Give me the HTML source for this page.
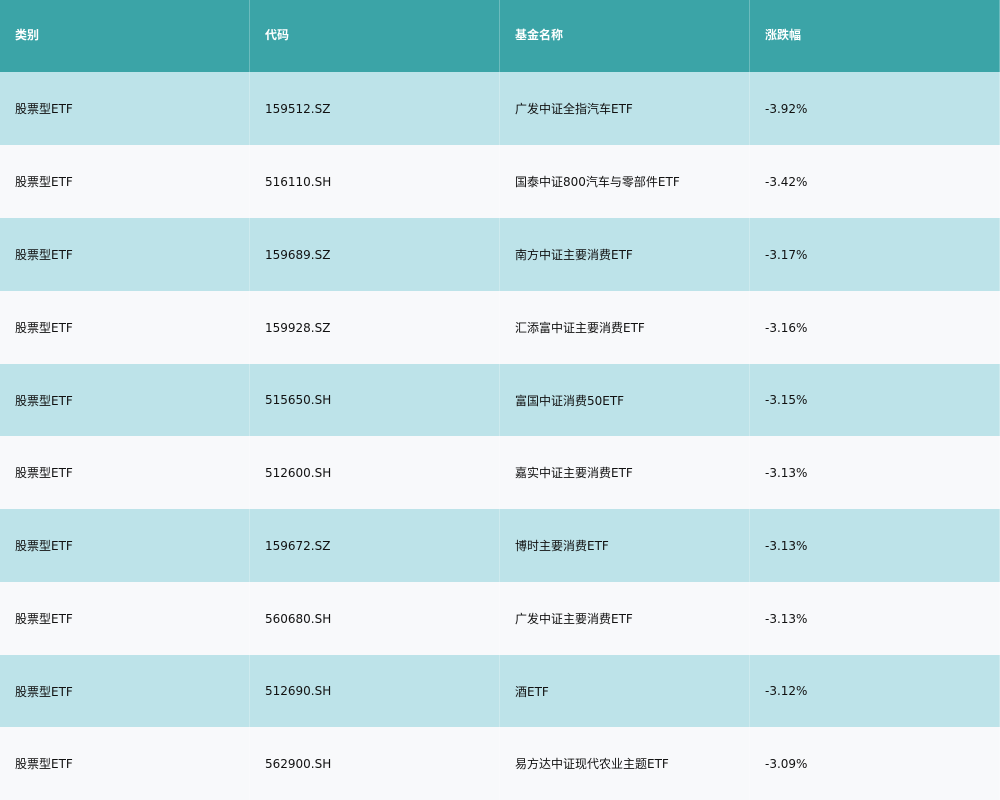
<!DOCTYPE html>
<html><head><meta charset="utf-8"><style>
html,body{margin:0;padding:0;width:1000px;height:800px;overflow:hidden;background:#f8f9fb}
.r{position:absolute;left:0;width:1000px;display:flex;align-items:center;font-family:"DejaVu Sans","Noto Sans CJK SC",sans-serif;font-size:12px;color:#111}
.c{width:250px;box-sizing:border-box;padding-left:15px;height:100%;display:flex;align-items:center;border-right:1px solid rgba(255,255,255,0.25)}
.h{background:#3ba4a7;color:#fff;font-weight:bold}
.h .c{padding-bottom:3px}
.a{background:#bde3e9}
.b{background:#f8f9fb}
</style></head><body>
<div class="r h" style="top:0;height:72px"><div class="c">类别</div><div class="c">代码</div><div class="c">基金名称</div><div class="c">涨跌幅</div></div>
<div class="r a" style="top:72px;height:73px"><div class="c">股票型ETF</div><div class="c">159512.SZ</div><div class="c">广发中证全指汽车ETF</div><div class="c">-3.92%</div></div>
<div class="r b" style="top:145px;height:73px"><div class="c">股票型ETF</div><div class="c">516110.SH</div><div class="c">国泰中证800汽车与零部件ETF</div><div class="c">-3.42%</div></div>
<div class="r a" style="top:218px;height:73px"><div class="c">股票型ETF</div><div class="c">159689.SZ</div><div class="c">南方中证主要消费ETF</div><div class="c">-3.17%</div></div>
<div class="r b" style="top:291px;height:73px"><div class="c">股票型ETF</div><div class="c">159928.SZ</div><div class="c">汇添富中证主要消费ETF</div><div class="c">-3.16%</div></div>
<div class="r a" style="top:364px;height:72px"><div class="c">股票型ETF</div><div class="c">515650.SH</div><div class="c">富国中证消费50ETF</div><div class="c">-3.15%</div></div>
<div class="r b" style="top:436px;height:73px"><div class="c">股票型ETF</div><div class="c">512600.SH</div><div class="c">嘉实中证主要消费ETF</div><div class="c">-3.13%</div></div>
<div class="r a" style="top:509px;height:73px"><div class="c">股票型ETF</div><div class="c">159672.SZ</div><div class="c">博时主要消费ETF</div><div class="c">-3.13%</div></div>
<div class="r b" style="top:582px;height:73px"><div class="c">股票型ETF</div><div class="c">560680.SH</div><div class="c">广发中证主要消费ETF</div><div class="c">-3.13%</div></div>
<div class="r a" style="top:655px;height:72px"><div class="c">股票型ETF</div><div class="c">512690.SH</div><div class="c">酒ETF</div><div class="c">-3.12%</div></div>
<div class="r b" style="top:727px;height:73px"><div class="c">股票型ETF</div><div class="c">562900.SH</div><div class="c">易方达中证现代农业主题ETF</div><div class="c">-3.09%</div></div>
</body></html>
